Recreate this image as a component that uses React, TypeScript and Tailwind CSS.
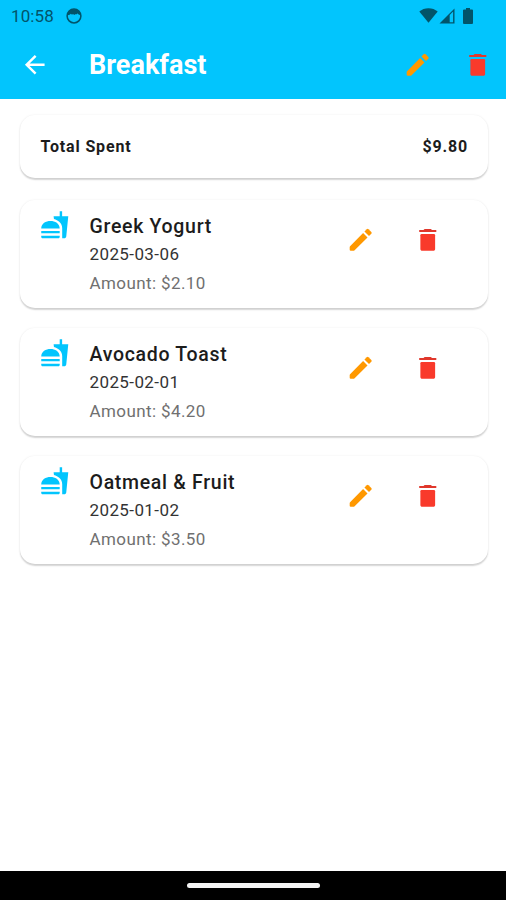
import React from 'react';
import { MdArrowBack, MdFastfood } from 'react-icons/md';

// ─── Data ────────────────────────────────────────────────────────────────────

const expenses = [
  { name: 'Greek Yogurt', date: '2025-03-06', amount: '$2.10' },
  { name: 'Avocado Toast', date: '2025-02-01', amount: '$4.20' },
  { name: 'Oatmeal & Fruit', date: '2025-01-02', amount: '$3.50' },
];

const CARD =
  'rounded-[15px] bg-white shadow-[0_1.5px_1.5px_rgba(0,0,0,0.15),0_0.5px_2.5px_rgba(0,0,0,0.06)]';

// ─── Icons ───────────────────────────────────────────────────────────────────

function EditIcon() {
  return (
    <svg className="size-[29.5px] text-[#ff9800]" viewBox="0 0 24 24" fill="currentColor">
      <path d="M3 17.9V20.1q0 .9.9.9H6.1q.4 0 .7-.3L17.5 10.1 13.9 6.5 3.3 17.2q-.3.3-.3.7Z" />
      <path d="M20.6 7.1q.6-.7 0-1.4L18.3 3.4q-.7-.6-1.4 0L15 5.3 18.7 9Z" />
    </svg>
  );
}

function DeleteIcon() {
  return (
    <svg className="size-[29.5px] text-[#f93a2b]" viewBox="0 0 24 24" fill="currentColor">
      <path d="M6 19.5c0 .9.6 1.500 1.500 1.500h9c.9 0 1.500-.6 1.500-1.500V8.400q0-1-1-1H7q-1 0-1 1Z" />
      <path
        d="M5.500 5.600q-.6 0-.6-.8t.6-.8H8.500L9.500 3.200h5l1 .8h3q.6 0 .6.800t-.6.8Z"
        fill="#e0372c"
      />
    </svg>
  );
}

// ─── Status Bar ──────────────────────────────────────────────────────────────

function StatusBar() {
  return (
    <div className="flex h-[30px] items-center pt-[1px] pl-[11px] pr-[33px] text-[#02546a]">
      <span className="text-[17px] leading-[20px] tracking-[0.1px]">10:58</span>
      <svg className="ml-3 size-4" viewBox="0 0 16 16" fill="none">
        <circle cx="8" cy="8" r="6.9" stroke="currentColor" strokeWidth="1.5" />
        <path
          d="M1.600 7.200C1.800 3 5 1.300 8 1.300s6.200 1.700 6.400 5.900c-1.500-.3-2.300-1-2.700-1.900-.5 1-1.300 1.300-2 .6-.9 1.100-2 1.100-2.700.1-.8.9-1.600.8-2.200-.2-.5.900-1.600 1.300-3.200 1.400Z"
          fill="currentColor"
        />
      </svg>
      <div className="ml-auto flex items-center">
        <svg className="h-[15px] w-[19px]" viewBox="0 0 19 15" fill="currentColor">
          <path d="M.3 3.600C2.800 1.500 6 .3 9.500.3s6.700 1.200 9.200 3.300L9.500 14.700Z" />
        </svg>
        <svg className="ml-px h-4 w-4" viewBox="0 0 16 16">
          <path d="M.5 15.500 15.500.500v15Z" fill="currentColor" />
          <path d="M10.700 6.900 14.100 3.500v10.700h-3.400Z" fill="#02c5fd" />
        </svg>
        <svg className="ml-[8px] h-4 w-[10px]" viewBox="0 0 10 16" fill="currentColor">
          <path d="M3 0h4v1.600h2a1 1 0 0 1 1 1V15a1 1 0 0 1-1 1H1a1 1 0 0 1-1-1V2.600a1 1 0 0 1 1-1h2Z" />
        </svg>
      </div>
    </div>
  );
}

// ─── Expense Card ────────────────────────────────────────────────────────────

function ExpenseCard({ name, date, amount }: { name: string; date: string; amount: string }) {
  return (
    <div className={`${CARD} flex h-[108px] pt-[9.5px] pl-[19.5px] pr-[45px]`}>
      <MdFastfood className="size-[29.5px] shrink-0 text-[#02c5fd]" />
      <div className="ml-[20.5px] flex-1">
        <h2 className="pt-[4.5px] text-[19.5px] font-medium leading-[26px] tracking-[0.7px] text-[#1c1c1c]">
          {name}
        </h2>
        <p className="pt-[3px] text-[17px] leading-[22px] tracking-[0.4px] text-[#333]">{date}</p>
        <p className="pt-[7px] text-[17px] leading-[22px] tracking-[0.4px] text-[#707070]">
          Amount: {amount}
        </p>
      </div>
      <div className="flex gap-[37.5px] pt-[15px]">
        <EditIcon />
        <DeleteIcon />
      </div>
    </div>
  );
}

// ─── Screen ──────────────────────────────────────────────────────────────────

export default function App() {
  return (
    <div className="flex h-[900px] w-[506px] flex-col bg-white font-[Roboto,sans-serif]">
      <header className="h-[98.5px] bg-[#02c5fd]">
        <StatusBar />
        <div className="flex h-[69px] items-center pl-[20px] pr-[14px]">
          <MdArrowBack className="size-[29.5px] text-white" />
          <h1 className="ml-[39.5px] text-[27px] font-bold leading-8 text-white">Breakfast</h1>
          <div className="ml-auto flex gap-[30px]">
            <EditIcon />
            <DeleteIcon />
          </div>
        </div>
      </header>

      <main className="flex flex-1 flex-col gap-5 pt-[16.5px] pr-[18.5px] pl-[20px]">
        <div
          className={`${CARD} mb-[2px] flex h-[63px] items-center justify-between pr-[19.5px] pl-[20.5px] text-[16px] font-bold tracking-[0.85px] text-[#1c1c1c]`}
        >
          <span>Total Spent</span>
          <span>{'$9.80'}</span>
        </div>
        {expenses.map((expense) => (
          <ExpenseCard key={expense.date} {...expense} />
        ))}
      </main>

      <footer className="flex h-[29px] items-center justify-center bg-black">
        <div className="h-[5px] w-[133px] rounded-full bg-[#f4f4f4]" />
      </footer>
    </div>
  );
}
